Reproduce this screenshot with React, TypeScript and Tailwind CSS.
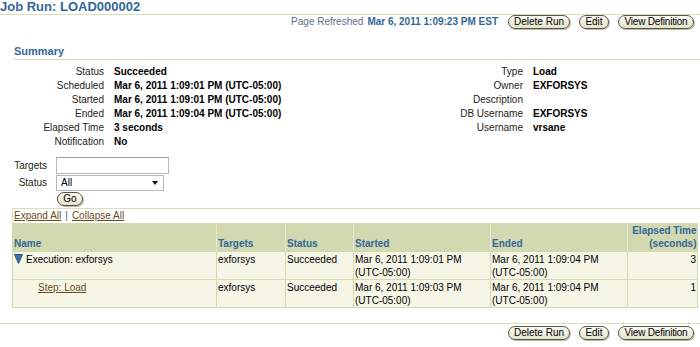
import { Fragment } from 'react'

const btn =
  'h-[14px] rounded-full border border-[#55554a] bg-linear-to-b from-[#fdfdf6] to-[#e3e3cb] text-[10px] leading-[12px] text-black text-center shadow-[1px_1px_0_#b9b9a3]'

const leftRows: [string, string][] = [
  ['Status', 'Succeeded'],
  ['Scheduled', 'Mar 6, 2011 1:09:01 PM (UTC-05:00)'],
  ['Started', 'Mar 6, 2011 1:09:01 PM (UTC-05:00)'],
  ['Ended', 'Mar 6, 2011 1:09:04 PM (UTC-05:00)'],
  ['Elapsed Time', '3 seconds'],
  ['Notification', 'No'],
]

const rightRows: [string, string][] = [
  ['Type', 'Load'],
  ['Owner', 'EXFORSYS'],
  ['Description', ''],
  ['DB Username', 'EXFORSYS'],
  ['Username', 'vrsane'],
]

function Buttons() {
  return (
    <div className="flex items-center gap-[9px]">
      <button className={`${btn} w-[62px]`}>Delete Run</button>
      <button className={`${btn} w-[30px]`}>Edit</button>
      <button className={`${btn} w-[76px] tracking-[-0.2px]`}>View Definition</button>
    </div>
  )
}

function Triangle() {
  return (
    <svg width="9" height="10" viewBox="0 0 9 10" className="mr-[3px] inline-block align-[-1px]">
      <polygon points="0.5,0.5 8.5,0.5 4.5,9.5" fill="#3d72aa" stroke="#24507e" strokeWidth="1" />
    </svg>
  )
}

const th = 'bg-[#d2d8b0] text-[#336699] font-bold align-bottom text-left px-px pb-px leading-[13px] border-l border-[#e6ead2]'
const td = 'bg-[#f6f6e7] align-top leading-[13px] px-px pt-[1px] border border-[#d2d8b0] h-[27px]'

export default function App() {
  return (
    <div className="h-[347px] w-[700px] overflow-hidden bg-white font-['Liberation_Sans',Arial,sans-serif] text-[10px] leading-[14px] text-black">
      <div className="border-b border-[#d9dfbd] pb-px">
        <h1 className="text-[13px] leading-[13px] font-bold text-[#336699]">Job Run: LOAD000002</h1>
      </div>

      <div className="flex h-[14px] items-center justify-end pr-[6px]">
        <span className="mr-[10px] leading-[14px]">
          <span className="mr-[4px] text-[#5b6f88]">Page Refreshed</span>
          <span className="font-bold text-[#336699]">Mar 6, 2011 1:09:23 PM EST</span>
        </span>
        <Buttons />
      </div>

      <div className="ml-[13px] mt-[15px] border-b border-[#d9dfbd] pb-px">
        <h2 className="pl-px text-[11px] leading-[14px] font-bold text-[#336699]">Summary</h2>
      </div>

      <div className="mt-[5px] flex">
        <div className="grid w-[420px] grid-cols-[104px_1fr] content-start gap-x-[10px]">
          {leftRows.map(([k, v]) => (
            <Fragment key={k}>
              <div className="text-right text-[#222]">{k}</div>
              <div className="font-bold">{v}</div>
            </Fragment>
          ))}
        </div>
        <div className="grid grid-cols-[103px_1fr] content-start gap-x-[10px]">
          {rightRows.map(([k, v]) => (
            <Fragment key={k}>
              <div className="text-right text-[#222]">{k}</div>
              <div className="font-bold">{v}</div>
            </Fragment>
          ))}
        </div>
      </div>

      <div className="mt-[8px] grid grid-cols-[47px_auto] items-center justify-start gap-x-[9px] gap-y-[1px]">
        <div className="text-right text-[#222]">Targets</div>
        <div className="h-[17px] w-[113px] border border-[#b4b9bd] border-t-[#9da3a8] bg-white" />
        <div className="text-right text-[#222]">Status</div>
        <div className="flex h-[16px] w-[108px] items-center justify-between border border-[#b4b9bd] bg-white pl-[4px] pr-[5px]">
          <span>All</span>
          <svg width="6" height="4" viewBox="0 0 6 4">
            <polygon points="0,0 6,0 3,4" fill="#111" />
          </svg>
        </div>
        <div className="h-[11px]" />
        <button className={`${btn} ml-px h-[11px] w-[26px] leading-[9px]`}>Go</button>
      </div>

      <div className="ml-[12px] mt-[2px] h-[15px] border-t border-l border-[#d9dfbd] pl-px leading-[14px]">
        <a className="text-[#6a4a20] underline">Expand All</a>
        <span className="mx-[4px] text-[#336699]">|</span>
        <a className="text-[#6a4a20] underline">Collapse All</a>
      </div>

      <table className="ml-[12px] w-[685px] table-fixed border-collapse">
        <colgroup>
          <col className="w-[204px]" />
          <col className="w-[69px]" />
          <col className="w-[68px]" />
          <col className="w-[137px]" />
          <col className="w-[137px]" />
          <col className="w-[70px]" />
        </colgroup>
        <thead>
          <tr className="h-[28px]">
            <th className={`${th} border-l-[#d2d8b0]`}>Name</th>
            <th className={th}>Targets</th>
            <th className={th}>Status</th>
            <th className={th}>Started</th>
            <th className={th}>Ended</th>
            <th className={`${th} text-right`}>
              Elapsed Time
              <br />
              (seconds)
            </th>
          </tr>
        </thead>
        <tbody>
          <tr>
            <td className={td}>
              <Triangle />
              Execution: exforsys
            </td>
            <td className={td}>exforsys</td>
            <td className={td}>Succeeded</td>
            <td className={td}>
              Mar 6, 2011 1:09:01 PM
              <br />
              (UTC-05:00)
            </td>
            <td className={td}>
              Mar 6, 2011 1:09:04 PM
              <br />
              (UTC-05:00)
            </td>
            <td className={`${td} text-right`}>3</td>
          </tr>
          <tr>
            <td className={td}>
              <a className="ml-[24px] text-[#6a4a20] underline">Step: Load</a>
            </td>
            <td className={td}>exforsys</td>
            <td className={td}>Succeeded</td>
            <td className={td}>
              Mar 6, 2011 1:09:03 PM
              <br />
              (UTC-05:00)
            </td>
            <td className={td}>
              Mar 6, 2011 1:09:04 PM
              <br />
              (UTC-05:00)
            </td>
            <td className={`${td} text-right`}>1</td>
          </tr>
        </tbody>
      </table>

      <div className="mt-[15px] border-t border-[#d9dfbd]" />
      <div className="mt-[2px] flex justify-end pr-[6px]">
        <Buttons />
      </div>
    </div>
  )
}
